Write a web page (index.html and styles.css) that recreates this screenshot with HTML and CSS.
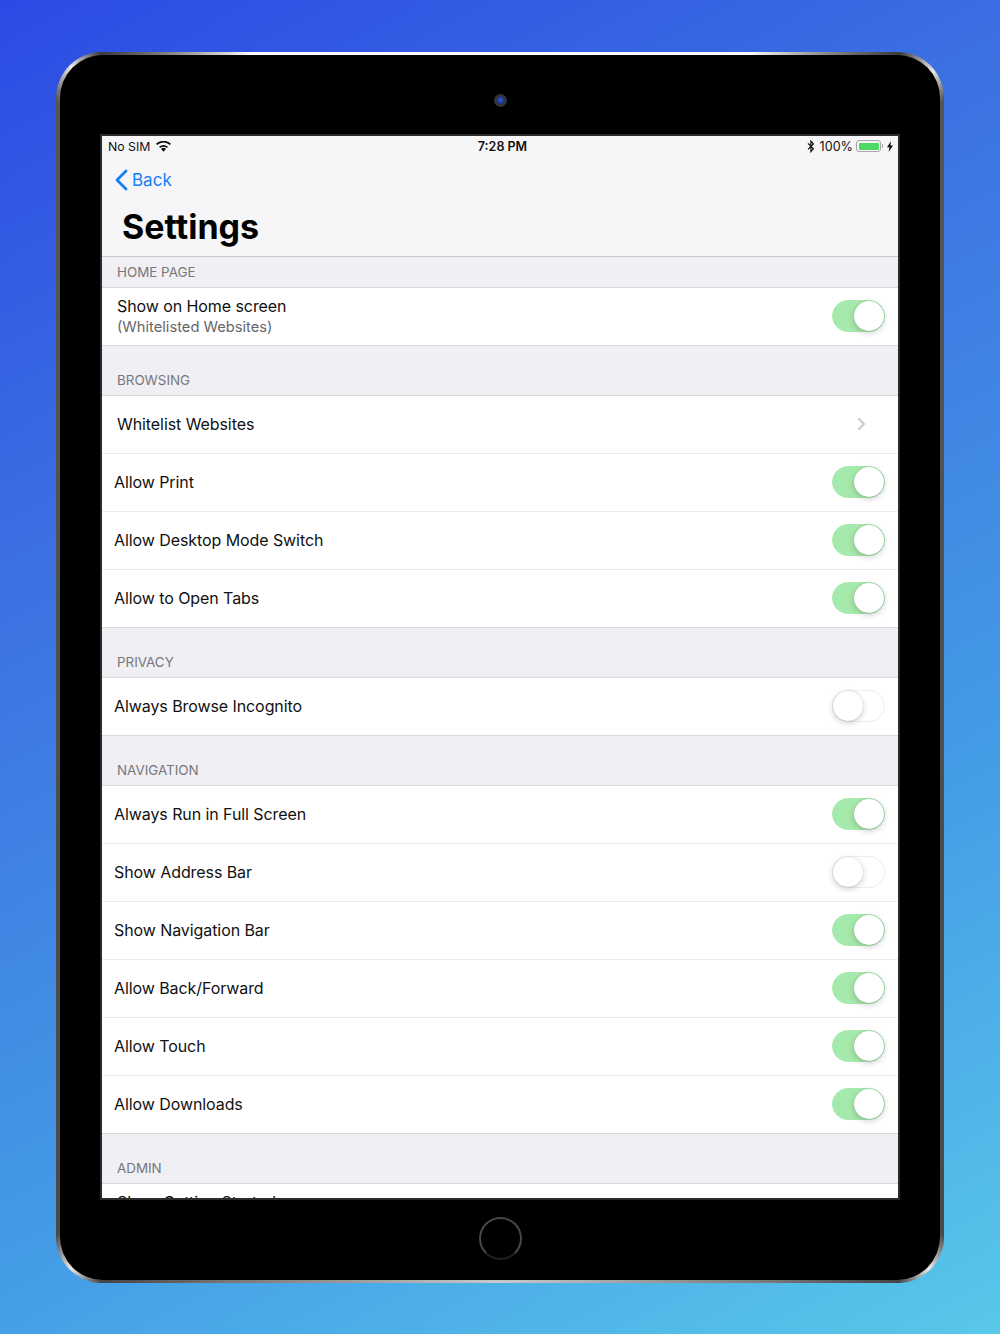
FILE: index.html
```html
<!DOCTYPE html>
<html lang="en">
<head>
  <meta charset="UTF-8" />
  <meta name="viewport" content="width=device-width, initial-scale=1.0"/>
  <title>Settings</title>
  <link rel="stylesheet" href="styles.css">
</head>
<body>

<div class="device">
  <div class="device-inner">
    <div class="bezel-top">
      <div class="camera"></div>
    </div>

    <div class="screen">
      <div class="status-bar">
        <div class="status-left">
          <span>No SIM</span>
          <svg class="wifi" width="15" height="11" viewBox="0 0 15 11">
            <path d="M7.500 10.800 5 8a3.600 3.600 0 0 1 5 0Z" fill="#111"/>
            <path d="M3 5.800a6.400 6.400 0 0 1 9 0l-1.200 1.300a4.700 4.700 0 0 0-6.600 0Z" fill="#111"/>
            <path d="M0 2.800a10.800 10.800 0 0 1 15 0L13.800 4.100a9 9 0 0 0-12.600 0Z" fill="#111"/>
          </svg>
        </div>
        <div class="status-time">7:28 PM</div>
        <div class="status-right">
          <svg width="8" height="13" viewBox="0 0 8 13">
            <path d="M1 3.400 6.400 8.800 3.900 11.600V1.200L6.400 4 1 9.400" fill="none" stroke="#111" stroke-width="1.200"/>
          </svg>
          <span class="status-percent">100%</span>
          <div class="battery"><div class="battery-fill"></div></div>
          <div class="battery-cap"></div>
          <svg class="bolt" width="6" height="11" viewBox="0 0 6 11">
            <path d="M4 0 0 6.200H2.400L1.700 11 6 4.500H3.400Z" fill="#111"/>
          </svg>
        </div>
      </div>

      <div class="nav-bar">
        <div class="back-link">
          <svg width="14" height="22" viewBox="0 0 14 22">
            <path d="M12 2 3 11l9 9" fill="none" stroke="#147efb" stroke-width="2.800" stroke-linecap="round" stroke-linejoin="round"/>
          </svg>
          <span>Back</span>
        </div>
        <h1>Settings</h1>
      </div>

      <div class="section-title first">HOME PAGE</div>
      <div class="group">
        <div class="row inset">
          <div class="row-text">
            <div class="row-label">Show on Home screen</div>
            <div class="row-sub">(Whitelisted Websites)</div>
          </div>
          <span class="toggle on"></span>
        </div>
      </div>

      <div class="section-title">BROWSING</div>
      <div class="group">
        <div class="row inset">
          <div class="row-label">Whitelist Websites</div>
          <svg class="chevron" width="9" height="14" viewBox="0 0 9 14">
            <path d="M1.500 1.500 7 7l-5.500 5.500" fill="none" stroke="#c5c5ca" stroke-width="1.800"/>
          </svg>
        </div>
        <div class="row"><div class="row-label">Allow Print</div><span class="toggle on"></span></div>
        <div class="row"><div class="row-label">Allow Desktop Mode Switch</div><span class="toggle on"></span></div>
        <div class="row"><div class="row-label">Allow to Open Tabs</div><span class="toggle on"></span></div>
      </div>

      <div class="section-title">PRIVACY</div>
      <div class="group">
        <div class="row"><div class="row-label">Always Browse Incognito</div><span class="toggle"></span></div>
      </div>

      <div class="section-title">NAVIGATION</div>
      <div class="group">
        <div class="row"><div class="row-label">Always Run in Full Screen</div><span class="toggle on"></span></div>
        <div class="row"><div class="row-label">Show Address Bar</div><span class="toggle"></span></div>
        <div class="row"><div class="row-label">Show Navigation Bar</div><span class="toggle on"></span></div>
        <div class="row"><div class="row-label">Allow Back/Forward</div><span class="toggle on"></span></div>
        <div class="row"><div class="row-label">Allow Touch</div><span class="toggle on"></span></div>
        <div class="row"><div class="row-label">Allow Downloads</div><span class="toggle on"></span></div>
      </div>

      <div class="section-title">ADMIN</div>
      <div class="group">
        <div class="row inset">
          <div class="row-text">
            <div class="row-label">Show Getting Started</div>
          </div>
        </div>
      </div>
    </div>

    <div class="bezel-bottom">
      <div class="home-button"></div>
    </div>
  </div>
</div>

</body>
</html>
```

FILE: styles.css
```css
* {
  box-sizing: border-box;
}

html,
body {
  height: 100%;
}

body {
  margin: 0;
  padding: 52px 56px 51px;
  overflow: hidden;
  font-family: 'Inter', 'Roboto', sans-serif;
  background: linear-gradient(152deg, #2c4ae4 0%, #3b6fe2 30%, #449be6 68%, #58c8ea 100%);
  color: #111;
}

/* tablet shell */
.device {
  height: 100%;
  padding: 3px 4px;
  border-radius: 46px;
  background: conic-gradient(
    #fff 0deg, #fff 22deg, #8a8a8a 28deg, #3a3a3a 33deg, #e8e8e8 36deg, #555 38deg,
    #4a4a4a 142deg, #e8e8e8 144.500deg, #444 147deg, #777 156deg, #c9c9c9 180deg, #777 204deg,
    #444 213deg, #e8e8e8 215.500deg, #4a4a4a 218deg,
    #555 322deg, #e8e8e8 324.500deg, #3a3a3a 327deg, #8a8a8a 332deg, #fff 338deg, #fff 360deg
  );
}

.device-inner {
  height: 100%;
  display: flex;
  flex-direction: column;
  border-radius: 43px;
  background: #000;
  padding: 0 40px;
}

.bezel-top {
  height: 79px;
  flex: none;
  display: flex;
  justify-content: center;
  align-items: center;
  padding-top: 11px;
}

.camera {
  width: 13px;
  height: 13px;
  border-radius: 50%;
  border: 3px solid #33343a;
  background: radial-gradient(circle at 50% 45%, #3060e0 0, #1f3a9c 60%, #10183c 100%);
}

.bezel-bottom {
  flex: 1;
  display: flex;
  justify-content: center;
  align-items: center;
  padding-bottom: 3px;
}

.home-button {
  width: 43px;
  height: 43px;
  border-radius: 50%;
  border: 2px solid #484848;
  border-bottom-color: #202020;
}

.screen {
  height: 1066px;
  flex: none;
  overflow: hidden;
  border: 2px solid #2b2b2b;
  background: #efeff4;
}

.status-bar {
  display: flex;
  align-items: center;
  justify-content: space-between;
  height: 20px;
  padding: 0 5px 0 6px;
  background: #f6f6f8;
  font-size: 12.300px;
}

.status-left,
.status-right {
  display: flex;
  align-items: center;
}

.status-left {
  width: 134px;
  gap: 6px;
}

.status-right {
  justify-content: flex-end;
  width: 130px;
  gap: 5px;
}

.status-time {
  font-weight: 600;
  font-size: 12.500px;
}

.status-percent {
  font-size: 12.600px;
}

.battery {
  width: 25px;
  height: 12px;
  padding: 1.500px;
  margin-left: -2px;
  border: 1px solid #a8a8a8;
  border-radius: 3px;
}

.battery-fill {
  height: 100%;
  background: #4cd964;
  border-radius: 1px;
}

.battery-cap {
  width: 1.500px;
  height: 4px;
  margin-left: -4.500px;
  background: #a8a8a8;
}

.bolt {
  margin-left: -1px;
}

.nav-bar {
  height: 100px;
  padding: 12px 0 0 12px;
  background: #f6f6f8;
}

.back-link {
  display: flex;
  align-items: center;
  gap: 4px;
  color: #147efb;
  font-size: 17px;
  line-height: 24px;
}

.nav-bar h1 {
  margin: 15px 0 0 8px;
  font-size: 34px;
  line-height: 40px;
  font-weight: 700;
  color: #000;
}

.section-title {
  height: 49px;
  padding: 0 15px 7px;
  display: flex;
  align-items: flex-end;
  font-size: 13.400px;
  line-height: 16px;
  color: #77777c;
}

.section-title.first {
  height: 31px;
  border-top: 1px solid #c9c9cd;
}

.group {
  background: #fff;
  border-top: 1px solid #d9d9dd;
  border-bottom: 1px solid #d9d9dd;
}

.row {
  height: 58px;
  padding: 0 13px 0 12px;
  display: flex;
  align-items: center;
  justify-content: space-between;
  border-bottom: 1px solid #ececee;
}

.row:last-child {
  height: 57px;
  border-bottom: none;
}

.row.inset {
  padding-left: 15px;
}

.row-text {
  height: 41px;
}

.row-label {
  padding-bottom: 2px;
  font-size: 16px;
  letter-spacing: -0.08px;
  line-height: 20px;
  color: #111;
}

.row-sub {
  font-size: 14.700px;
  line-height: 19px;
  color: #66666a;
}

.chevron {
  margin: 0 19px 2px 0;
}

/* same look as a disabled ios switch */
.toggle {
  position: relative;
  width: 53px;
  height: 32px;
  flex: none;
  margin-bottom: 1px;
  border-radius: 16px;
  background: #fff;
  border: 1.500px solid #eeeeee;
}

.toggle::after {
  content: "";
  position: absolute;
  top: -0.500px;
  left: -0.500px;
  width: 30px;
  height: 30px;
  border-radius: 50%;
  background: #fff;
  box-shadow: 0 2px 6px rgba(0, 0, 0, 0.2), 0 0 1px rgba(0, 0, 0, 0.2);
}

.toggle.on {
  background: #a6e9ac;
  border-color: #a6e9ac;
}

.toggle.on::after {
  left: 21px;
}
```
